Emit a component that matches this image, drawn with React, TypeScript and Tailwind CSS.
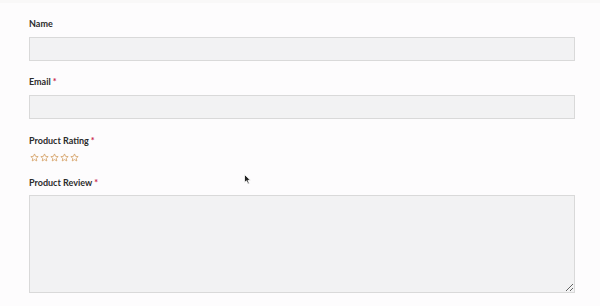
import React from "react";

function Star() {
  return (
    <svg width="9" height="9" viewBox="0 0 24 24" fill="none" stroke="#d6a266" strokeWidth="2.2" strokeLinejoin="round">
      <polygon points="12,2.5 14.9,8.9 21.8,9.6 16.6,14.3 18.1,21.2 12,17.6 5.9,21.2 7.4,14.3 2.2,9.6 9.1,8.9" />
    </svg>
  );
}

function Label({ text, required }: { text: string; required?: boolean }) {
  return (
    <div className="h-3 flex items-center text-[9px] font-bold leading-3 text-[#2b2b2b]">
      {text}
      {required && <span className="ml-[2px] text-[#c8264c]">*</span>}
    </div>
  );
}

export default function App() {
  return (
    <div
      className="relative w-[600px] h-[306px] overflow-hidden bg-[#fdfcfd]"
      style={{ fontFamily: "Lato, 'Open Sans', sans-serif" }}
    >
      <div className="h-[3px] bg-[#f9f8f8]" />
      <div className="px-[29px] pt-[15px]">
        <Label text="Name" />
        <input className="mt-[7px] block w-[546px] h-6 bg-[#f2f2f3] border border-[#d9d9d9] outline-none" />

        <div className="mt-[15px]">
          <Label text="Email" required />
        </div>
        <input className="mt-[7px] block w-[546px] h-6 bg-[#f2f2f3] border border-[#d9d9d9] outline-none" />

        <div className="mt-4">
          <Label text="Product Rating" required />
        </div>
        <div className="mt-[6px] flex gap-[1px] pl-px">
          <Star />
          <Star />
          <Star />
          <Star />
          <Star />
        </div>

        <div className="mt-[15px]">
          <Label text="Product Review" required />
        </div>
        <textarea className="mt-[6px] block w-[546px] h-[98px] bg-[#f2f2f3] border border-[#d9d9d9] outline-none resize-y" />
      </div>

      <svg className="absolute left-[244px] top-[174px]" width="8" height="11" viewBox="0 0 8 11">
        <path d="M0.5 0.5 L0.5 8.5 L2.5 6.8 L4 10 L5.3 9.4 L3.9 6.3 L6.5 6.3 Z" fill="#222" stroke="#fff" strokeWidth="0.8" />
      </svg>
    </div>
  );
}
